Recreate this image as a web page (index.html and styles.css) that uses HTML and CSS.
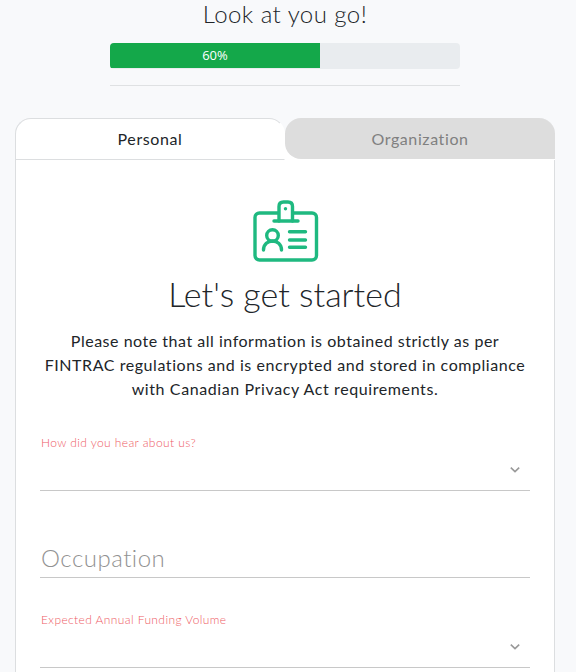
FILE: index.html
```
<!DOCTYPE html>
<html lang="en">
<head>
    <meta charset="UTF-8">
    <meta name="viewport" content="width=device-width, initial-scale=1.0">
    <title>Get Started</title>
    <link rel="stylesheet" href="styles.css">
</head>
<body>

    <div class="page">
        <header class="progress-header">
            <h4>Look at you go!</h4>
            <div class="progress">
                <div class="progress-bar" style="width: 60%">60%</div>
            </div>
            <hr>
        </header>

        <main class="card">
            <div class="tabs">
                <button class="tab active">Personal</button>
                <button class="tab tab-org">Organization</button>
            </div>

            <div class="card-body">
                <!-- ID badge icon -->
                <svg class="badge-icon" width="66" height="64" viewBox="0 0 66 64" fill="none" stroke="#1fb980" stroke-width="3.4" stroke-linecap="round">
                    <rect x="2" y="14" width="61.5" height="47" rx="4.5"/>
                    <path d="M26 22V7.5Q26 3 30.5 3H35Q39.500 3 39.5 7.5V22" fill="#fff"/>
                    <path d="M21 22H45"/>
                    <circle cx="32.5" cy="9.7" r="1.7" fill="#1fb980" stroke="none"/>
                    <circle cx="19.5" cy="36.5" r="5.8"/>
                    <path d="M10.5 51C10.5 39 28.5 39 28.5 51"/>
                    <path d="M36.500 32.700H52.500M36.500 41H52.500M36.500 48.200H52.500"/>
                </svg>
                <h2>Let's get started</h2>
                <p class="note">
                    <span class="line line-1">Please note that all information is obtained strictly as per</span>
                    <span class="line line-2">FINTRAC regulations and is encrypted and stored in compliance</span>
                    <span class="line line-3">with Canadian Privacy Act requirements.</span>
                </p>

                <div class="field select-field">
                    <label>How did you hear about us?</label>
                    <svg class="arrow" width="10" height="6" viewBox="0 0 10 6"><path d="M.8.7L5 4.7L9.2.7"/></svg>
                </div>
                <div class="field text-field">Occupation</div>
                <div class="field select-field">
                    <label>Expected Annual Funding Volume</label>
                    <svg class="arrow" width="10" height="6" viewBox="0 0 10 6"><path d="M.8.7L5 4.7L9.2.7"/></svg>
                </div>
            </div>
        </main>
    </div>

</body>
</html>
```

FILE: styles.css
```
/* General Styling */
* {
    box-sizing: border-box;
}

body {
    margin: 0;
    background-color: #f8f9fb;
    color: #212529;
    font-family: Lato, "Open Sans", sans-serif;
    font-size: 16px;
    line-height: 24px;
}

.page {
    width: 570px;
    padding: 0 15px;
}

/* Progress */
.progress-header {
    width: 350px;
    margin: 0 auto;
    text-align: center;
}

h4 {
    margin: 0;
    padding-bottom: 15px;
    font-size: 24px;
    font-weight: 300;
    line-height: 28px;
    letter-spacing: 0.45px;
}

.progress {
    height: 26px;
    border-radius: 4px;
    background-color: #e9ecef;
    overflow: hidden;
}

.progress-bar {
    height: 25px;
    background-color: #14a84a;
    color: #fff;
    font-family: "Open Sans", sans-serif;
    font-size: 13px;
    font-weight: 500;
    line-height: 25px;
}

hr {
    margin: 16px 0 0;
    border: 0;
    border-top: 1px solid #dfe1e3;
}

/* Card and Tabs */
.card {
    height: 554px;
    margin-top: 32px;
    border: 1px solid #dcdee0;
    border-top: 0;
    border-bottom: 0;
    border-radius: 16px 16px 0 0;
    background-color: #fff;
}

.tabs {
    display: flex;
    height: 42px;
    margin: 0 -1px;
    border-radius: 16px 16px 0 0;
    background: linear-gradient(#f8f9fb 20px, #fff 20px);
}

.tab {
    width: 270px;
    height: 42px;
    padding: 0 0 2px;
    border: 1px solid #dcdee0;
    border-right-color: #fff;
    border-radius: 16px 16px 0 0;
    background-color: #fff;
    color: #212529;
    font-family: inherit;
    font-size: 16px;
    letter-spacing: 0.6px;
}

.tab-org {
    height: 41px;
    padding: 0;
    border: 0;
    border-radius: 16px 16px 0 16px;
    background-color: #ddd;
    color: #808080;
}

.card-body {
    padding: 39px 24px 0;
    text-align: center;
}

.badge-icon {
    display: block;
    margin: 0 auto 0 213px;
}

h2 {
    margin: 12px 0 16px;
    font-size: 34px;
    font-weight: 300;
    line-height: 38px;
}

.note {
    margin: 0;
}

.line {
    display: block;
    white-space: nowrap;
}

.line-1 {
    letter-spacing: 0.52px;
}

.line-2 {
    letter-spacing: 0.56px;
}

.line-3 {
    letter-spacing: 0.6px;
}

/* Form Fields */
.field {
    width: 490px;
    border-bottom: 1px solid #c8c8c8;
    text-align: left;
}

.select-field {
    height: 60px;
    margin-top: 30px;
}

.select-field label {
    display: block;
    padding-left: 1px;
    color: #ee5a64;
    font-size: 12px;
    font-weight: 300;
    letter-spacing: 0.4px;
}

.arrow {
    display: block;
    margin: 12px 10px 0 auto;
    fill: none;
    stroke: #999;
    stroke-width: 1.6;
}

.text-field {
    height: 37px;
    margin-top: 50px;
    padding-left: 1px;
    color: #929292;
    font-size: 24px;
    font-weight: 300;
    line-height: 34px;
    letter-spacing: 0.5px;
}
```
